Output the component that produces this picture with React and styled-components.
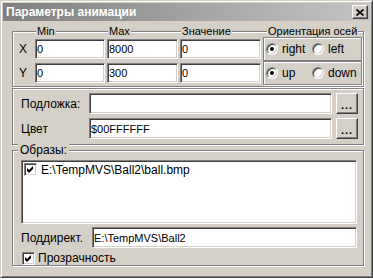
import React from 'react';
import styled, { createGlobalStyle } from 'styled-components';

const GlobalStyle = createGlobalStyle`
  body {
    margin: 0;
    background: #ffffff;
    font-family: 'Liberation Sans', Arial, sans-serif;
    font-size: 11px;
    color: #000;
  }
`;

const Window = styled.div`
  box-sizing: border-box;
  width: 373px;
  height: 278px;
  padding: 2px;
  background: #d4d0c8;
  border: 1px solid;
  border-color: #d4d0c8 #404040 #404040 #d4d0c8;
  box-shadow: inset 1px 1px #fff, inset -1px -1px #808080;
  display: flex;
  flex-direction: column;
`;

const TitleBar = styled.div`
  height: 18px;
  display: flex;
  align-items: center;
  justify-content: space-between;
  padding: 0 2px 0 3px;
  background: linear-gradient(90deg, #808080, #c4c4c4);
`;

const Title = styled.span`
  color: #fff;
  font-weight: bold;
  font-size: 12px;
`;

const CloseButton = styled.div`
  box-sizing: border-box;
  width: 16px;
  height: 14px;
  display: flex;
  align-items: center;
  justify-content: center;
  background: #d4d0c8;
  border: 1px solid;
  border-color: #fff #404040 #404040 #fff;
  box-shadow: inset -1px -1px #808080;
`;

const Body = styled.div`
  padding: 10px 6px 0 9px;
  display: flex;
  flex-direction: column;
`;

const Group = styled.div`
  border: 1px solid #808080;
  box-shadow: 1px 1px 0 #fff, inset 1px 1px 0 #fff;
  margin-top: ${({ $gap }) => $gap || 0}px;
  padding: ${({ $pad }) => $pad || '0'};
`;

const Caption = styled.span`
  justify-self: start;
  align-self: start;
  line-height: 14px;
  background: #d4d0c8;
  padding: 0 1px;
  margin-left: ${({ $offset }) => $offset || 1}px;
`;

const AxisGrid = styled.div`
  display: grid;
  grid-template-columns: 20px 70px 71px 81px 99px;
  grid-template-rows: 13px 24px 24px;
  column-gap: 2px;
  margin-top: -8px;
  align-items: center;
`;

const AxisLabel = styled.span`
  text-align: center;
  font-size: 12px;
`;

const Field = styled.div`
  box-sizing: border-box;
  height: ${({ $h }) => $h || 20}px;
  display: flex;
  align-items: center;
  padding-left: 1px;
  background: #fff;
  border: 1px solid;
  border-color: #808080 #fff #fff #808080;
  box-shadow: inset 1px 1px #404040, inset -1px -1px #d4d0c8;
  white-space: nowrap;
  overflow: hidden;
`;

const RadioPanel = styled.div`
  box-sizing: border-box;
  align-self: stretch;
  display: grid;
  grid-template-columns: 46px 1fr;
  align-items: center;
  padding-left: 2px;
  border: 1px solid #808080;
  box-shadow: 1px 1px 0 #fff, inset 1px 1px 0 #fff;
`;

const Option = styled.label`
  display: flex;
  align-items: center;
  gap: 4px;
  font-size: 12px;
`;

const RadioDot = styled.span`
  box-sizing: border-box;
  width: 12px;
  height: 12px;
  border-radius: 50%;
  background: #fff;
  border: 1px solid;
  border-color: #808080 #fff #fff #808080;
  box-shadow: inset 1px 1px #404040, inset -1px -1px #d4d0c8;
  display: flex;
  align-items: center;
  justify-content: center;

  &::after {
    content: '';
    width: 4px;
    height: 4px;
    border-radius: 50%;
    background: ${({ $on }) => ($on ? '#000' : 'transparent')};
  }
`;

const FormGrid = styled.div`
  display: grid;
  grid-template-columns: 64px 1fr 22px;
  grid-auto-rows: 21px;
  column-gap: 4px;
  row-gap: 4px;
  align-items: center;
`;

const RowLabel = styled.span`
  font-size: 12px;
`;

const DotsButton = styled.div`
  box-sizing: border-box;
  height: 21px;
  display: flex;
  align-items: center;
  justify-content: center;
  padding-top: 3px;
  background: #d4d0c8;
  border: 1px solid;
  border-color: #fff #404040 #404040 #fff;
  box-shadow: inset -1px -1px #808080;
  font-weight: bold;
  letter-spacing: 1px;
`;

const ImagesBody = styled.div`
  display: flex;
  flex-direction: column;
  padding: 0 6px 0 8px;
`;

const GroupCaption = styled.span`
  align-self: flex-start;
  margin: -8px 0 3px -3px;
  padding: 0 2px;
  line-height: 14px;
  font-size: 12px;
  background: #d4d0c8;
`;

const ListBox = styled.div`
  box-sizing: border-box;
  height: 64px;
  background: #fff;
  border: 1px solid;
  border-color: #808080 #fff #fff #808080;
  box-shadow: inset 1px 1px #404040, inset -1px -1px #d4d0c8;
`;

const ListItem = styled.div`
  display: flex;
  align-items: center;
  gap: 4px;
  height: 15px;
  padding: 1px 0 0 2px;
  font-size: 12px;
`;

const SubdirRow = styled.div`
  display: grid;
  grid-template-columns: 71px 1fr;
  align-items: center;
  margin-top: 3px;
`;

const CheckRow = styled.label`
  display: flex;
  align-items: center;
  gap: 3px;
  height: 14px;
  margin: 3px 0 0 1px;
  font-size: 12px;
`;

const Box = styled.span`
  box-sizing: border-box;
  width: 13px;
  height: 13px;
  flex: none;
  display: flex;
  align-items: center;
  justify-content: center;
  background: #fff;
  border: 1px solid;
  border-color: #808080 #fff #fff #808080;
  box-shadow: inset 1px 1px #404040, inset -1px -1px #d4d0c8;
`;

const Check = () => (
  <Box>
    <svg width="9" height="9" viewBox="0 0 9 9">
      <polygon points="1,3 3,5 7,1 7,4 3,8 1,6" fill="#000" />
    </svg>
  </Box>
);

const App = () => (
  <>
    <GlobalStyle />
    <Window>
      <TitleBar>
        <Title>Параметры анимации</Title>
        <CloseButton>
          <svg width="8" height="7" viewBox="0 0 8 7">
            <path d="M0.5 0.5 L7.5 6.5 M7.5 0.5 L0.5 6.5" stroke="#000" strokeWidth="1.7" />
          </svg>
        </CloseButton>
      </TitleBar>

      <Body>
        <Group $pad="0 0 1px 0">
          <AxisGrid>
            <span />
            <Caption>Min</Caption>
            <Caption>Max</Caption>
            <Caption>Значение</Caption>
            <Caption $offset={4}>Ориентация осей</Caption>

            <AxisLabel>X</AxisLabel>
            <Field>0</Field>
            <Field>8000</Field>
            <Field>0</Field>
            <RadioPanel>
              <Option><RadioDot $on />right</Option>
              <Option><RadioDot />left</Option>
            </RadioPanel>

            <AxisLabel>Y</AxisLabel>
            <Field>0</Field>
            <Field>300</Field>
            <Field>0</Field>
            <RadioPanel>
              <Option><RadioDot $on />up</Option>
              <Option><RadioDot />down</Option>
            </RadioPanel>
          </AxisGrid>
        </Group>

        <Group $gap={1} $pad="4px 5px 5px 8px">
          <FormGrid>
            <RowLabel>Подложка:</RowLabel>
            <Field $h={21} />
            <DotsButton>...</DotsButton>
            <RowLabel>Цвет</RowLabel>
            <Field $h={21}>$00FFFFFF</Field>
            <DotsButton>...</DotsButton>
          </FormGrid>
        </Group>

        <Group $gap={5}>
          <ImagesBody>
            <GroupCaption>Образы:</GroupCaption>
            <ListBox>
              <ListItem>
                <Check />
                E:\TempMVS\Ball2\ball.bmp
              </ListItem>
            </ListBox>
            <SubdirRow>
              <RowLabel>Поддирект.</RowLabel>
              <Field $h={21}>E:\TempMVS\Ball2</Field>
            </SubdirRow>
            <CheckRow>
              <Check />
              Прозрачность
            </CheckRow>
          </ImagesBody>
        </Group>
      </Body>
    </Window>
  </>
);

export default App;
